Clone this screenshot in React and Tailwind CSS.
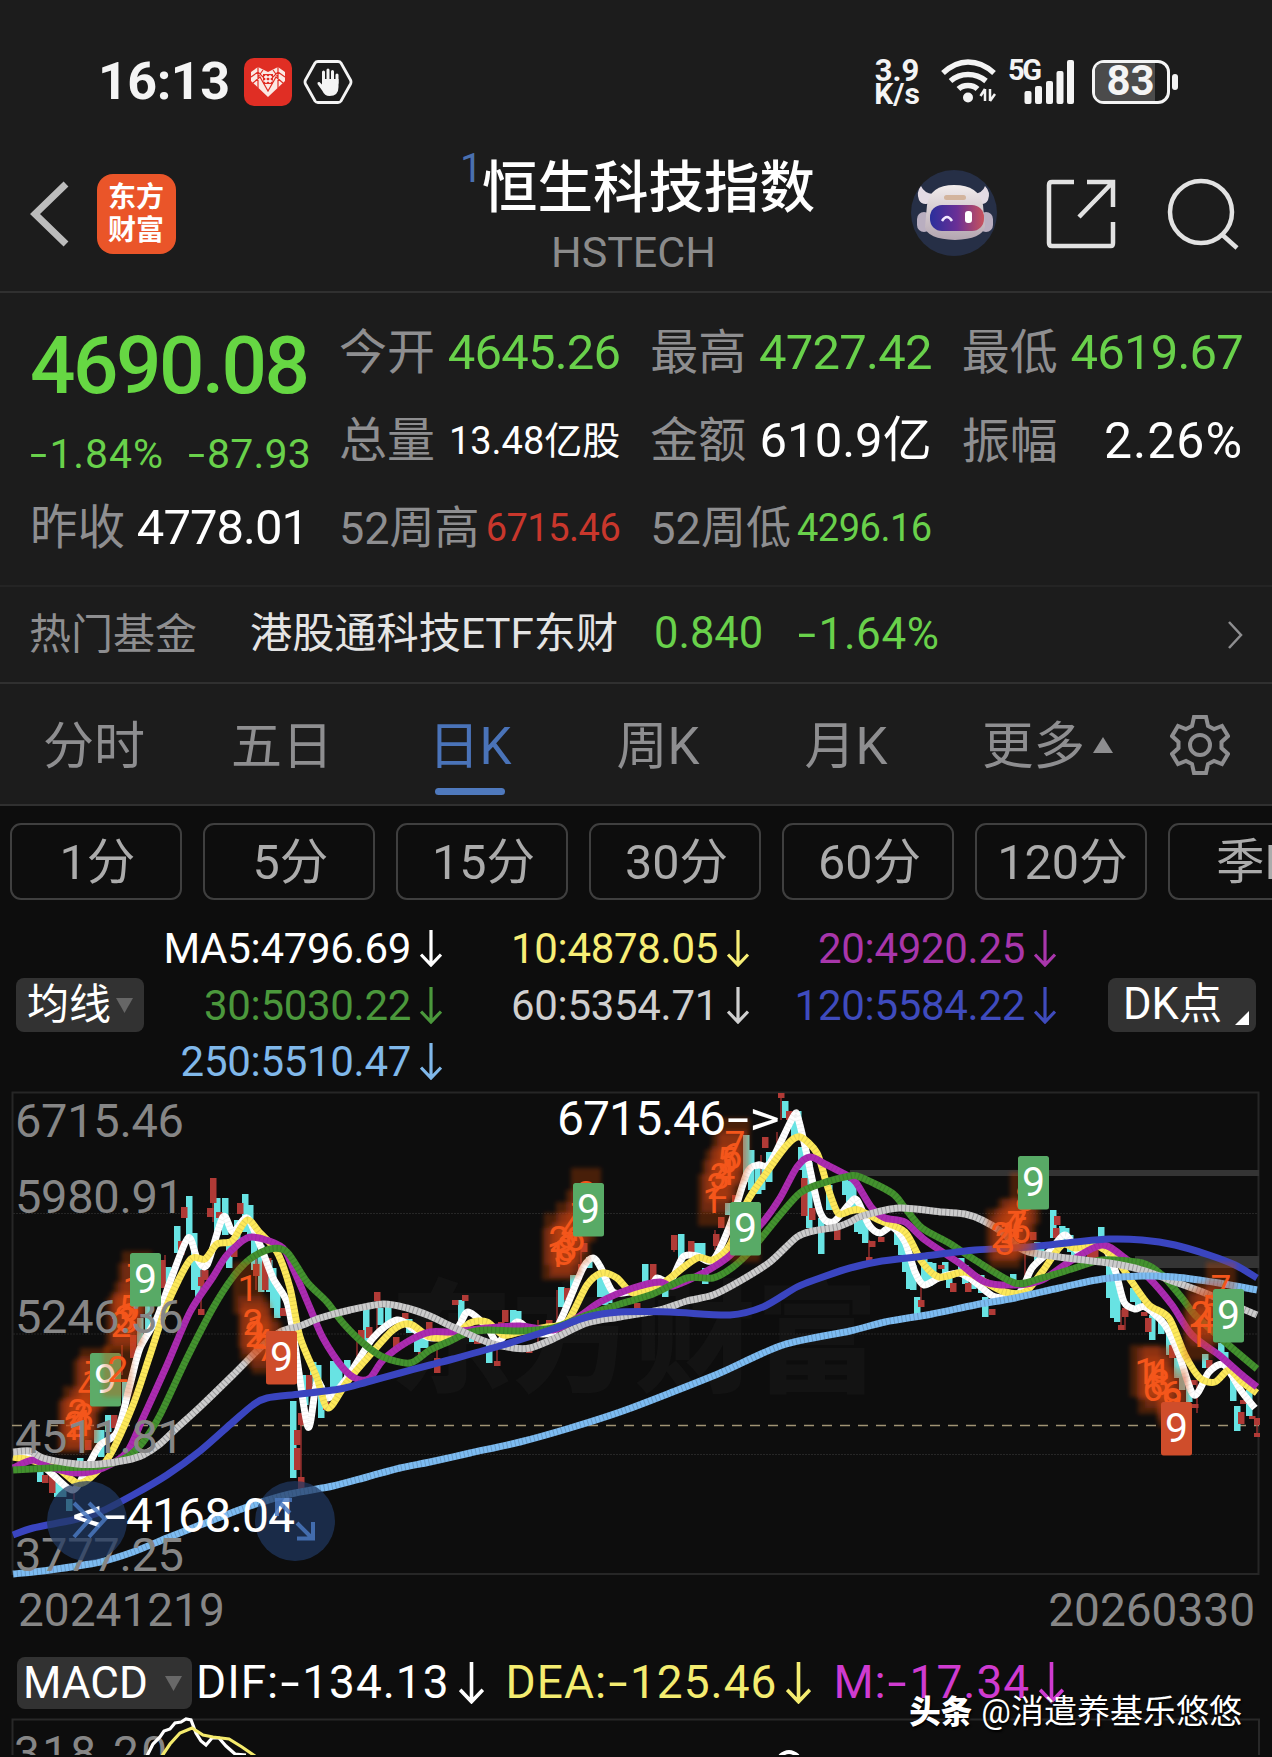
import { Fragment } from 'react'

const quotes = [
    { label: '今开', value: '4645.26', color: 'text-[#69d14b]', size: 'text-[49px] tracking-[-0.8px]' },
    { label: '最高', value: '4727.42', color: 'text-[#69d14b]', size: 'text-[49px] tracking-[-0.8px]' },
    { label: '最低', value: '4619.67', color: 'text-[#69d14b]', size: 'text-[49px] tracking-[-0.8px]' },
    { label: '总量', value: '13.48亿股', color: 'text-white', size: 'relative -top-[3px] text-[38px]' },
    { label: '金额', value: '610.9亿', color: 'text-white', size: 'text-[49px]' },
    { label: '振幅', value: '2.26%', color: 'text-white', size: 'text-[50px] tracking-[1px]' },
    { label: '52周高', value: '6715.46', color: 'text-[#c9372c]', size: 'relative -top-[3px] text-[38px] tracking-[-0.5px]', small: true },
    { label: '52周低', value: '4296.16', color: 'text-[#69d14b]', size: 'relative -top-[3px] text-[38px] tracking-[-0.5px]', small: true },
]

const tabs = ['分时', '五日', '日K', '周K', '月K']
const periods = ['1分', '5分', '15分', '30分', '60分', '120分', '季K']

const averages = [
    { text: 'MA5:4796.69', color: 'text-white' },
    { text: '10:4878.05', color: 'text-[#f7ee76]' },
    { text: '20:4920.25', color: 'text-[#a836ab]' },
    { text: '30:5030.22', color: 'text-[#4b983c]' },
    { text: '60:5354.71', color: 'text-[#cfcfcf]' },
    { text: '120:5584.22', color: 'text-[#3f4bbd]' },
    { text: '250:5510.47', color: 'text-[#80b8ea]' },
]

const macd = [
    { text: 'DIF:-134.13', color: 'text-white' },
    { text: 'DEA:-125.46', color: 'text-[#f4ec70]' },
    { text: 'M:-17.34', color: 'text-[#cf3bd0]' },
]

// moving averages, x y pairs
const lines = {
    ma5: '13 1456 33 1457 50 1472 73 1490 87 1468 100 1445 117 1432 130 1385 140 1348 157 1318 170 1282 188 1238 197 1258 207 1265 223 1217 233 1232 247 1218 260 1245 273 1278 287 1302 295 1345 308 1427 317 1382 328 1398 347 1378 373 1338 397 1320 415 1330 433 1338 457 1328 468 1312 487 1327 498 1342 517 1322 533 1333 553 1332 563 1315 583 1268 593 1258 601 1268 613 1292 630 1292 647 1293 657 1278 670 1282 683 1257 697 1256 713 1260 730 1225 747 1173 758 1165 770 1163 793 1117 798 1118 807 1155 820 1212 833 1222 850 1203 857 1200 869 1225 880 1233 892 1227 905 1242 915 1272 924 1285 939 1278 959 1273 975 1282 995 1297 1019 1293 1032 1268 1049 1252 1065 1235 1079 1252 1102 1245 1115 1270 1124 1302 1135 1309 1145 1307 1165 1325 1179 1355 1194 1395 1209 1372 1224 1365 1242 1392 1255 1408',
    ma10: '13 1457 30 1460 57 1468 77 1483 90 1478 110 1455 133 1405 150 1355 167 1305 190 1260 205 1259 217 1244 232 1241 247 1220 260 1233 277 1252 290 1288 300 1337 317 1378 328 1408 347 1382 370 1355 393 1330 410 1324 430 1337 453 1337 470 1323 487 1322 503 1335 520 1332 547 1327 567 1322 587 1285 602 1273 617 1278 633 1293 657 1287 670 1278 697 1258 713 1260 730 1245 747 1202 767 1172 787 1145 800 1137 817 1153 827 1185 838 1213 850 1211 859 1210 879 1220 905 1232 922 1262 939 1277 965 1272 985 1282 1005 1292 1025 1292 1042 1272 1062 1245 1075 1248 1095 1245 1115 1258 1132 1282 1149 1305 1169 1318 1185 1355 1200 1378 1215 1382 1229 1370 1242 1382 1257 1393',
    ma20: '13 1468 33 1460 50 1467 77 1473 103 1468 127 1452 143 1418 167 1365 190 1312 213 1277 227 1255 247 1238 263 1239 283 1248 293 1268 310 1308 323 1338 343 1368 357 1379 370 1378 383 1360 407 1342 430 1332 453 1332 487 1328 520 1326 553 1330 577 1318 600 1302 633 1288 660 1282 673 1286 703 1273 727 1258 745 1240 763 1222 780 1198 797 1167 810 1157 827 1165 850 1177 857 1184 872 1208 885 1218 905 1222 925 1240 959 1263 985 1282 1015 1285 1042 1280 1069 1262 1102 1245 1125 1258 1149 1278 1172 1305 1192 1335 1219 1355 1242 1375 1257 1387',
    ma30: '13 1470 50 1468 100 1466 127 1457 143 1442 160 1415 187 1358 213 1308 233 1277 250 1259 270 1249 287 1252 307 1282 327 1302 343 1323 363 1343 383 1357 410 1363 430 1350 450 1341 467 1333 487 1330 520 1331 553 1328 587 1315 620 1304 653 1294 687 1278 713 1278 733 1267 753 1248 780 1215 800 1193 820 1184 850 1176 860 1177 892 1193 905 1208 922 1228 949 1243 975 1260 1015 1283 1042 1278 1075 1268 1102 1260 1142 1263 1162 1275 1182 1298 1195 1315 1225 1342 1257 1369',
    ma60: '13 1452 30 1451 43 1458 77 1464 100 1464 127 1460 143 1455 160 1444 177 1428 200 1407 233 1375 260 1348 280 1332 300 1326 320 1318 350 1310 383 1304 407 1308 430 1316 453 1327 487 1342 513 1348 530 1348 553 1339 587 1323 620 1317 660 1310 687 1301 713 1295 740 1281 770 1262 797 1237 813 1231 837 1227 850 1222 862 1216 899 1208 942 1212 965 1214 982 1220 1002 1232 1015 1245 1029 1252 1059 1257 1109 1263 1142 1270 1175 1282 1205 1293 1257 1315',
    ma120: '13 1535 33 1528 73 1520 100 1512 133 1495 167 1475 200 1451 233 1422 253 1405 267 1398 300 1394 340 1389 367 1382 400 1373 430 1365 453 1359 503 1345 553 1329 587 1317 620 1312 670 1312 730 1315 763 1307 797 1287 820 1278 850 1268 882 1261 925 1256 975 1250 1029 1247 1075 1242 1109 1239 1142 1240 1175 1245 1209 1255 1235 1265 1257 1278',
    ma250: '13 1574 50 1570 100 1562 133 1552 167 1538 200 1525 250 1506 290 1494 333 1486 367 1477 400 1468 430 1462 470 1453 520 1442 570 1428 620 1412 670 1393 720 1373 783 1345 850 1331 885 1322 932 1314 975 1305 1015 1298 1059 1288 1102 1279 1142 1276 1175 1277 1219 1283 1257 1290',
}

// candles: x, top, bottom
const falling = [
    [40, 1470, 1482], [57, 1482, 1497], [63, 1484, 1497], [69, 1499, 1511], [80, 1458, 1468], [86, 1462, 1470], [97, 1430, 1443], [101, 1430, 1457], [108, 1415, 1432],
    [125, 1382, 1402], [140, 1318, 1345], [148, 1305, 1332], [168, 1267, 1298], [177, 1226, 1253], [189, 1196, 1240], [194, 1233, 1290],
    [198, 1262, 1297], [217, 1198, 1235], [225, 1198, 1235], [229, 1240, 1268], [237, 1220, 1240], [245, 1194, 1232], [250, 1205, 1238], [254, 1230, 1270],
    [261, 1245, 1292], [269, 1260, 1292], [273, 1268, 1308], [277, 1285, 1318], [293, 1401, 1478], [305, 1375, 1405], [313, 1362, 1385],
    [318, 1365, 1390], [321, 1385, 1418], [333, 1361, 1390], [339, 1365, 1392], [347, 1360, 1380], [363, 1330, 1345], [366, 1308, 1342], [380, 1308, 1325], [388, 1307, 1322],
    [409, 1319, 1333], [417, 1332, 1352], [421, 1335, 1348], [425, 1336, 1348], [461, 1300, 1320], [472, 1330, 1342], [489, 1342, 1363], [513, 1310, 1323], [518, 1311, 1323],
    [561, 1287, 1307], [573, 1275, 1292], [589, 1257, 1268], [600, 1272, 1297], [605, 1275, 1305], [609, 1285, 1303], [645, 1264, 1284], [665, 1285, 1297],
    [681, 1234, 1262], [697, 1243, 1260], [702, 1243, 1260], [705, 1268, 1284], [728, 1203, 1215], [746, 1135, 1182], [751, 1150, 1190], [758, 1168, 1194], [762, 1165, 1190], [769, 1152, 1182],
    [785, 1101, 1118], [794, 1115, 1138], [798, 1111, 1138], [801, 1147, 1170], [805, 1150, 1180], [809, 1162, 1228], [821, 1218, 1254], [829, 1185, 1210],
    [845, 1178, 1195], [849, 1181, 1202], [853, 1181, 1212], [857, 1218, 1232], [861, 1220, 1234], [865, 1220, 1243], [897, 1229, 1245], [901, 1235, 1255], [905, 1240, 1272], [909, 1255, 1289], [913, 1265, 1290],
    [917, 1297, 1314], [924, 1255, 1284], [929, 1262, 1286], [933, 1263, 1278], [945, 1262, 1277], [949, 1276, 1288], [961, 1258, 1270], [965, 1265, 1284], [973, 1276, 1289], [981, 1275, 1293],
    [985, 1297, 1317], [1013, 1274, 1284], [1037, 1242, 1262], [1041, 1245, 1260], [1053, 1210, 1238], [1062, 1226, 1240], [1066, 1228, 1244], [1070, 1235, 1252], [1074, 1240, 1256],
    [1101, 1227, 1247], [1109, 1263, 1298], [1113, 1272, 1318], [1117, 1275, 1322], [1133, 1288, 1302], [1138, 1294, 1310], [1152, 1315, 1340], [1161, 1318, 1334], [1169, 1332, 1355],
    [1177, 1358, 1378], [1182, 1368, 1390], [1189, 1385, 1402], [1205, 1354, 1368], [1221, 1343, 1358], [1225, 1352, 1366], [1233, 1372, 1401], [1237, 1406, 1431], [1249, 1390, 1416],
]

const rising = [
    [45, 1475, 1483], [52, 1475, 1493], [88, 1440, 1450], [114, 1415, 1428], [133, 1335, 1358], [162, 1260, 1288], [181, 1241, 1255], [184, 1207, 1218],
    [201, 1277, 1286], [201, 1309, 1315], [205, 1270, 1280], [213, 1178, 1203], [210, 1208, 1217], [219, 1212, 1218], [234, 1246, 1257], [240, 1203, 1214], [256, 1264, 1276], [265, 1258, 1290],
    [268, 1258, 1270], [283, 1308, 1316], [301, 1413, 1425], [297, 1430, 1445], [297, 1448, 1470], [301, 1477, 1490], [309, 1375, 1392], [326, 1402, 1410], [361, 1330, 1340],
    [369, 1327, 1338], [377, 1292, 1301], [396, 1337, 1348], [405, 1313, 1319], [421, 1352, 1358], [429, 1322, 1330], [437, 1358, 1373], [455, 1300, 1305], [465, 1295, 1301], [477, 1340, 1344],
    [497, 1361, 1366], [501, 1322, 1328], [505, 1310, 1322], [529, 1347, 1353], [549, 1320, 1327], [567, 1288, 1300], [581, 1264, 1272], [584, 1243, 1252], [637, 1303, 1309],
    [653, 1264, 1280], [674, 1235, 1250], [691, 1241, 1256], [716, 1234, 1246], [721, 1217, 1228], [735, 1195, 1204], [765, 1137, 1148], [781, 1093, 1098], [789, 1111, 1120],
    [804, 1178, 1216], [812, 1208, 1220], [837, 1228, 1240], [869, 1257, 1263], [872, 1241, 1247], [881, 1237, 1242], [921, 1300, 1307], [941, 1265, 1269], [953, 1283, 1292], [968, 1283, 1292],
    [992, 1309, 1315], [1033, 1232, 1240], [1057, 1216, 1225], [1056, 1228, 1238], [1090, 1250, 1258], [1095, 1250, 1258], [1121, 1325, 1330], [1125, 1308, 1317], [1144, 1312, 1316], [1148, 1318, 1332], [1172, 1345, 1358], [1193, 1380, 1385],
    [1209, 1360, 1368], [1195, 1404, 1408], [1241, 1412, 1424], [1243, 1400, 1404], [1257, 1418, 1425], [1257, 1433, 1437], [1252, 1416, 1419],
]

const wicks = [
    [201, 1270, 1315], [213, 1178, 1222], [301, 1413, 1480], [74, 1480, 1500], [122, 1345, 1375], [165, 1255, 1300], [256, 1255, 1290], [357, 1335, 1370], [377, 1298, 1330], [437, 1350, 1360],
    [497, 1345, 1365], [538, 1320, 1345], [557, 1290, 1325], [581, 1245, 1280], [674, 1235, 1252], [777, 1132, 1160], [781, 1093, 1120], [869, 1240, 1260], [921, 1280, 1305],
    [1025, 1240, 1290], [1121, 1310, 1330], [1125, 1308, 1330], [1197, 1380, 1413], [1257, 1418, 1437], [715, 1230, 1250], [761, 1155, 1175],
]

// running counts that lead up to a nine-turn badge: x, y (left top of the cell), digit
const counts = [
    [58, 1401, '1'], [60, 1398, '2'], [63, 1386, '2'], [66, 1397, '4'], [69, 1390, '3'], [73, 1360, '4'], [77, 1356, '1'], [80, 1348, '7'],
    [106, 1298, '2'], [110, 1292, '3'], [113, 1294, '3'], [114, 1282, '5'], [118, 1263, '1'], [122, 1251, '7'],
    [233, 1262, '1'], [238, 1296, '2'], [240, 1308, '2'], [242, 1302, '1'], [248, 1316, '4'], [252, 1322, '7'],
    [542, 1228, '1'], [544, 1213, '2'], [549, 1226, '3'], [552, 1222, '8'], [556, 1202, '4'], [560, 1212, '6'], [566, 1190, '7'], [571, 1168, '8'],
    [698, 1174, '1'], [702, 1160, '2'], [705, 1150, '3'], [710, 1146, '4'], [712, 1134, '5'], [717, 1130, '6'], [720, 1118, '7'], [730, 1210, '8'],
    [986, 1209, '2'], [990, 1216, '3'], [994, 1208, '1'], [998, 1199, '4'], [1002, 1198, '7'], [1006, 1204, '6'], [1010, 1172, '8'],
    [1130, 1345, '1'], [1137, 1348, '1'], [1143, 1346, '4'], [1138, 1362, '6'], [1145, 1356, '8'], [1157, 1368, '6'], [1158, 1375, '8'],
    [1183, 1308, '1'], [1186, 1288, '2'], [1190, 1294, '4'], [1196, 1282, '5'], [1206, 1262, '7'],
]

const badges = [
    { x: 90, y: 1353, fill: '#5dab68' },
    { x: 130, y: 1253, fill: '#58aa66' },
    { x: 266, y: 1331, fill: '#cf4d2b' },
    { x: 573, y: 1183, fill: '#58aa66' },
    { x: 730, y: 1202, fill: '#58aa66' },
    { x: 1018, y: 1156, fill: '#58aa66' },
    { x: 1161, y: 1402, fill: '#cf4d2b' },
    { x: 1213, y: 1289, fill: '#58aa66' },
]

const axis = [
    ['6715.46', 1137],
    ['5980.91', 1213],
    ['5246.36', 1333],
    ['4511.81', 1453],
    ['3777.25', 1571],
]

const toPath = (str) => {
    const n = str.split(' ').map(Number)
    const p = []
    for (let i = 0; i < n.length; i += 2) p.push([n[i], n[i + 1]])
    let d = `M${p[0][0]} ${p[0][1]}`
    for (let i = 0; i < p.length - 1; i++) {
        const a = p[i - 1] || p[i]
        const b = p[i]
        const c = p[i + 1]
        const e = p[i + 2] || c
        d += `C${b[0] + (c[0] - a[0]) / 7} ${b[1] + (c[1] - a[1]) / 7} ${c[0] - (e[0] - b[0]) / 7} ${c[1] - (e[1] - b[1]) / 7} ${c[0]} ${c[1]}`
    }
    return d
}

// hyphens are drawn wider than the font's own
const Num = ({ children }) =>
    children.split('-').map((part, i) => (
        <Fragment key={i}>
            {i > 0 && <span className="inline-block scale-x-150 mx-[0.1em]">-</span>}
            {part}
        </Fragment>
    ))

const DownArrow = ({ className }) => (
    <svg viewBox="0 0 22 37" className={className} fill="none" stroke="currentColor" strokeWidth="3.2">
        <path d="M11 0V35M1 24.500L11 35L21 24.500" />
    </svg>
)

const StatusBar = () => (
    <div className="flex items-center h-[134px] pt-[30px] pl-[98px] pr-[94px] text-[#f4f4f4]">
        <span className="text-[52px] font-bold leading-none tracking-[-0.5px] w-[146px]">16:13</span>
        <svg width="48" height="48" viewBox="0 0 48 48">
            <rect width="48" height="48" rx="10" fill="#e02e24" />
            <path d="M24 39L7 23V14L14 9L24 14L34 9L41 14V23Z" fill="#fbe9e4" />
            <path d="M7 19L14 14L24 24L34 14L41 19M14 9V30M34 9V30M9 25L16 19L24 33L32 19L39 25M19 12L14 19M29 12L34 19" stroke="#e02e24" strokeWidth="1.200" fill="none" />
            <rect x="19" y="16" width="10" height="10" fill="#e02e24" />
            <path d="M20 19H28M19.500 23H28.500M22 17V25M26 17V25" stroke="#fff" strokeWidth="1.300" />
        </svg>
        <svg width="50" height="46" viewBox="0 0 50 46" className="ml-[11px]">
            <path d="M15 2.500H35Q37 2.500 38 4L47.500 21Q48.500 23 47.500 25L38 42Q37 43.500 35 43.500H15Q13 43.500 12 42L2.500 25Q1.500 23 2.500 21L12 4Q13 2.500 15 2.500Z" fill="none" stroke="#f4f4f4" strokeWidth="2.800" />
            <path d="M20.500 23V13M25 22V11M29.500 22V12.500M34 24V16" stroke="#f4f4f4" strokeWidth="3" strokeLinecap="round" />
            <path d="M19 20H35.500V28Q35.500 37 26.500 37Q21.500 37 19.500 32L14.500 25Q14 22.500 16.500 23L19 25.500Z" fill="#f4f4f4" />
        </svg>
        <div className="ml-auto w-[50px] mr-[19px] text-center font-bold text-[31px] leading-[23px] whitespace-nowrap">
            <div>3.9</div>
            <div className="text-[30px]">K/s</div>
        </div>
        <svg width="56" height="46" viewBox="0 0 56 46" fill="none" stroke="#f4f4f4" strokeWidth="5.500">
            <path d="M2 14Q14 3 27 3Q41 3 53 14M9.500 22Q17 15.500 27 15.500Q37 15.500 45 22M17.500 30Q21 26.500 27 26.500Q33 26.500 36.500 30" />
            <circle cx="27" cy="38.500" r="5" fill="#f4f4f4" stroke="none" />
            <path d="M44 30V42M44 30L39.500 37M49 42V30M49 42L54 35" strokeWidth="2.500" />
        </svg>
        <div className="relative w-[66px] h-[46px] ml-[12px]">
            <span className="absolute left-[-1px] top-[-1px] text-[29px] leading-[24px] font-bold tracking-[-2.5px]">5G</span>
            <svg width="66" height="46" viewBox="0 0 66 46" fill="#f4f4f4">
                <rect x="15.500" y="32" width="7" height="13" rx="2" />
                <rect x="26" y="27" width="7" height="18" rx="2" />
                <rect x="37" y="22" width="7" height="23" rx="2" />
                <rect x="47.500" y="12" width="7" height="33" rx="2" />
                <rect x="58" y="1" width="7" height="44" rx="2" />
            </svg>
        </div>
        <div className="relative ml-[17px] w-[78px] h-[44px] rounded-[12px] border-[3.5px] border-[#f4f4f4] shrink-0">
            <div className="h-full w-[60px] rounded-l-[8px] bg-[#4b4b4b]" />
            <span className="absolute inset-0 pr-[1px] text-center text-[42px] leading-[36px] font-bold">83</span>
        </div>
        <div className="w-[6px] h-[16px] ml-[2px] rounded-[3px] bg-[#f4f4f4] shrink-0" />
    </div>
)

const Robot = () => (
    <svg width="88" height="88" viewBox="0 0 88 88">
        <defs>
            <linearGradient id="visor" x1="0" x2="1">
                <stop offset="0" stopColor="#2a2f9c" />
                <stop offset="0.500" stopColor="#6a2f96" />
                <stop offset="1" stopColor="#c8525c" />
            </linearGradient>
            <linearGradient id="shell" x1="0" x2="0" y1="0" y2="1">
                <stop offset="0" stopColor="#f2ecec" />
                <stop offset="1" stopColor="#b3a5b0" />
            </linearGradient>
        </defs>
        <circle cx="44" cy="44" r="43" fill="#262f46" />
        <path d="M11 17Q6 23 9 31Q12 37 21 34L23 25Q14 24 11 17ZM75 17Q81 23 78 31Q75 37 67 34L63 25Q73 24 75 17Z" fill="#e4dbe4" />
        <rect x="7" y="43" width="14" height="20" rx="7" fill="#b9aec0" />
        <rect x="69" y="43" width="14" height="20" rx="7" fill="#b9aec0" />
        <path d="M17 36Q20 16 44 16Q69 16 73 36L75 58Q72 70 45 71Q17 70 15 58Z" fill="url(#shell)" />
        <rect x="34" y="26" width="22" height="5" rx="2.500" fill="#d3b49d" />
        <rect x="20" y="36" width="54" height="26" rx="12" fill="url(#visor)" />
        <path d="M32 52Q37 44 42 52" stroke="#f3e9ff" strokeWidth="2.500" fill="none" />
        <rect x="55" y="42" width="7" height="12" rx="3" fill="#fff" />
    </svg>
)

const Header = () => (
    <div className="flex items-start h-[159px] border-b-2 border-[#303030]">
        <svg width="40" height="66" viewBox="0 0 40 66" className="ml-[30px] mt-[47px]" fill="none" stroke="#bcbcbc" strokeWidth="7">
            <path d="M36 3L5 33L36 63" />
        </svg>
        <div className="ml-[27px] mt-[40px] w-[79px] h-[80px] rounded-[16px] bg-[#ea5529] text-white font-bold text-[28px] leading-[33px] text-center pt-[7px] pr-[1px]">
            东方
            <br />
            财富
        </div>
        <div className="ml-[285px] w-[352px] flex">
            <span className="text-[40px] leading-none text-[#4a70b0] mt-[15px] -ml-[1px]">1</span>
            <div className="w-[332px] flex flex-col items-center">
                <span className="text-[55.5px] leading-[60px] font-medium text-white mt-[25px] whitespace-nowrap">恒生科技指数</span>
                <span className="text-[43px] leading-[50px] text-[#8b8b8b] mt-[8px] -ml-[30px]">HSTECH</span>
            </div>
        </div>
        <div className="ml-auto mt-[35px] mr-[33px] flex items-center">
            <Robot />
            <svg width="70" height="70" viewBox="0 0 70 70" className="ml-[48px] mt-[2px]" fill="none" stroke="#e2e2e2" strokeWidth="4.500">
                <path d="M28 3H6Q3 3 3 6V64Q3 67 6 67H65Q67 67 67 64V43M41 3H67V28M66 4L33 38" />
            </svg>
            <svg width="72" height="72" viewBox="0 0 72 72" className="ml-[51px] mt-[2px]" fill="none" stroke="#e2e2e2" strokeWidth="4.500">
                <circle cx="34" cy="34" r="31" />
                <path d="M55.500 57L70 70" />
            </svg>
        </div>
    </div>
)

const Quote = () => (
    <div className="flex h-[294px] pl-[31px] pr-[29px] pt-[13px] border-b-2 border-[#242424]">
        <div className="w-[279px] mr-[29px] whitespace-nowrap">
            <div className="text-[80px] leading-[88px] font-medium text-[#66d743] tracking-[-2.5px] mt-[16px] -ml-[1px]">4690.08</div>
            <div className="flex justify-between text-[41px] leading-[50px] text-[#69d14b] mt-[19px] -ml-[2px]">
                <span className="tracking-[0.9px]"><Num>-1.84%</Num></span>
                <span className="tracking-[0.2px] -mr-[1px]"><Num>-87.93</Num></span>
            </div>
            <div className="flex items-baseline justify-between mt-[19px] leading-[60px]">
                <span className="text-[47.5px] text-[#8e8e90] -ml-[1px]">昨收</span>
                <span className="text-[49px] text-white mr-[2px] tracking-[-1px]">4778.01</span>
            </div>
        </div>
        <div className="flex-1 grid grid-cols-3 gap-x-[30px] auto-rows-[88px] whitespace-nowrap mt-[3px]">
            {quotes.map((q) => (
                <div key={q.label} className="flex items-baseline justify-between leading-[88px]">
                    <span className={`text-[#8e8e90] ${q.small ? 'text-[45px]' : 'text-[48px]'}`}>{q.label}</span>
                    <span className={`${q.size} ${q.color}`}>{q.value}</span>
                </div>
            ))}
        </div>
    </div>
)

const FundRow = () => (
    <div className="flex items-center h-[97px] pl-[29px] pr-[28px] border-b-2 border-[#303030] whitespace-nowrap">
        <span className="text-[42px] text-[#8e8e90] w-[221px]">热门基金</span>
        <span className="text-[42.2px] text-[#e4e4e4] w-[404px] pb-[1px]">港股通科技ETF东财</span>
        <span className="text-[43.5px] text-[#69d14b] w-[143px] pb-[2px]">0.840</span>
        <span className="text-[44px] text-[#69d14b] pb-[2px] tracking-[0.6px]"><Num>-1.64%</Num></span>
        <svg width="18" height="30" viewBox="0 0 18 30" className="ml-auto" fill="none" stroke="#8e8e90" strokeWidth="2.500">
            <path d="M3 2L15 15L3 28" />
        </svg>
    </div>
)

const gearPoints = 'M24 2H36L38 11L44 14L52 11L58 21L51.500 27V33L58 39L52 49L44 46L38 49L36 58H24L22 49L16 46L8 49L2 39L8.500 33V27L2 21L8 11L16 14L22 11Z'

const Tabs = () => (
    <div className="flex items-center h-[122px] border-b-2 border-[#303030] text-[51px] text-[#8e8e90]">
        {tabs.map((tab) => (
            <div
                key={tab}
                className={`relative w-[188px] h-full flex items-center justify-center pt-[6px] whitespace-nowrap ${tab === '日K' ? 'text-[#4a73b8]' : ''}`}
            >
                {tab}
                {tab === '日K' && <span className="absolute bottom-[9px] w-[70px] h-[7px] rounded-full bg-[#4f79bd]" />}
            </div>
        ))}
        <span className="ml-[42px] pt-[6px] text-[51.5px] whitespace-nowrap">更多</span>
        <svg width="20" height="16" viewBox="0 0 20 16" className="ml-[8px] mt-[2px]">
            <path d="M10 0L20 16H0Z" fill="#8e8e90" />
        </svg>
        <svg width="60" height="60" viewBox="0 0 60 60" className="ml-[57px] mt-[2px]" fill="none" stroke="#8e8e90" strokeWidth="4">
            <path d={gearPoints} />
            <circle cx="30" cy="30" r="10" />
        </svg>
    </div>
)

const Periods = () => (
    <div className="flex gap-[21px] pl-[10px] pt-[17px] h-[114px] overflow-hidden">
        {periods.map((p) => (
            <div key={p} className="w-[172px] h-[77px] shrink-0 rounded-[11px] border-2 border-[#3f3f3f] flex items-center justify-center pt-[4px] pl-[3px] text-[48.5px] text-[#ababab] whitespace-nowrap">
                {p}
            </div>
        ))}
    </div>
)

const Averages = () => (
    <div className="relative flex items-center h-[170px] pl-[16px] pr-[16px]">
        <div className="w-[128px] h-[54px] rounded-[8px] bg-[#323232] flex items-center pl-[11px] text-white text-[42px] leading-none whitespace-nowrap">
            均线
            <svg width="17" height="15" viewBox="0 0 17 15" className="ml-[5px]">
                <path d="M0 0H17L8.500 15Z" fill="#666" />
            </svg>
        </div>
        <div className="grid grid-cols-[298px_307px_307px] auto-rows-[56.5px] text-[42px]">
            {averages.map((a) => (
                <div key={a.text} className={`flex items-center justify-end gap-[9px] ${a.color} tracking-[-0.3px]`}>
                    {a.text}
                    <DownArrow className="w-[22px] h-[37px]" />
                </div>
            ))}
        </div>
        <div className="relative ml-auto w-[148px] h-[54px] rounded-[8px] bg-[#323232] pl-[15px] text-white text-[43.5px] leading-[53px] whitespace-nowrap">
            DK点
            <svg width="14" height="14" viewBox="0 0 14 14" className="absolute right-[7px] bottom-[7px]">
                <path d="M14 0V14H0Z" fill="#fff" />
            </svg>
        </div>
    </div>
)

const MaLine = ({ data, color, ticks }) => (
    <>
        <path d={toPath(data)} fill="none" stroke={color} strokeWidth="7" strokeLinejoin="round" />
        {ticks && <path d={toPath(data)} fill="none" stroke="#101018" strokeOpacity={ticks} strokeWidth="7" strokeDasharray="1 3" />}
    </>
)

const KChart = () => (
    <svg width="1272" height="490" viewBox="0 1090 1272 490" className="block shrink-0">
        <defs>
            <filter id="soft" x="-20%" y="-20%" width="140%" height="140%">
                <feGaussianBlur stdDeviation="2" />
            </filter>
            <clipPath id="plot">
                <rect x="12" y="1090" width="1248" height="490" />
            </clipPath>
        </defs>

        <text x="390" y="1382" fontSize="122" fontWeight="900" fill="#131313">东方财富</text>

        <rect x="12.500" y="1092.500" width="1246" height="481.500" fill="none" stroke="#262626" strokeWidth="2" />
        {[1213.5, 1334, 1454.5].map((y) => (
            <path key={y} d={`M13 ${y}H1259`} stroke="#262626" strokeDasharray="2 1" />
        ))}

        <rect x="850" y="1170" width="409" height="6" fill="#343434" />
        <rect x="1135" y="1256" width="124" height="12" fill="#343434" />

        <path d="M12 1425.500H1259" stroke="#a09374" strokeWidth="1.500" strokeDasharray="10 8" />

        <g clipPath="url(#plot)">
            {falling.map(([x, t, b], i) => (
                <rect key={i} x={x - 3} y={t} width="6.500" height={b - t} fill="#68e3e3" />
            ))}
            {wicks.map(([x, t, b], i) => (
                <path key={i} d={`M${x} ${t}V${b}`} stroke="#a83432" strokeWidth="1.300" />
            ))}
            {rising.map(([x, t, b], i) => (
                <rect key={i} x={x - 3} y={t} width="6.500" height={b - t} fill="#b03a36" />
            ))}
            <MaLine data={lines.ma5} color="#ffffff" ticks="0.06" />
            <MaLine data={lines.ma10} color="#fde95a" ticks="0.1" />
            <MaLine data={lines.ma20} color="#ab2bb0" ticks="0.06" />
            <MaLine data={lines.ma30} color="#43922e" ticks="0.15" />
            <MaLine data={lines.ma60} color="#cccccc" ticks="0.25" />
            <MaLine data={lines.ma120} color="#3a45c0" />
            <MaLine data={lines.ma250} color="#7dbcf2" ticks="0.18" />
        </g>

        <g filter="url(#soft)" fill="#d0470f" fillOpacity="0.3">
            {counts.map(([x, y], i) => (
                <rect key={i} x={x} y={y} width="30" height="52" />
            ))}
        </g>
        <g fill="#f4561b" fontSize="37" textAnchor="middle">
            {counts.map(([x, y, n], i) => (
                <text key={i} x={x + 15} y={y + 39}>{n}</text>
            ))}
        </g>

        <g fontSize="47" fill="#868686">
            {axis.map(([label, y]) => (
                <text key={label} x="15" y={y} textLength="169">{label}</text>
            ))}
        </g>

        {badges.map((b) => (
            <g key={b.x}>
                <rect x={b.x} y={b.y} width="31" height="53.500" rx="2.500" fill={b.fill} />
                <text x={b.x + 15.5} y={b.y + 40} fontSize="41" fill="#fff" textAnchor="middle">9</text>
            </g>
        ))}

        {/* first count of the next run lies on the badge */}
        <rect x="103" y="1345" width="30" height="52" fill="#d0470f" fillOpacity="0.3" filter="url(#soft)" />
        <text x="118" y="1382" fontSize="37" fill="#f4561b" textAnchor="middle">2</text>

        <g fillOpacity="0.72" fill="#20385f">
            <circle cx="87" cy="1521" r="40" />
            <circle cx="295" cy="1521" r="40" />
        </g>
        <g fontSize="48" fill="#fff">
            <text x="557" y="1135" textLength="169">6715.46</text>
            <text x="72" y="1532" textLength="32" lengthAdjust="spacingAndGlyphs">&lt;</text>
            <text x="104" y="1532" textLength="22" lengthAdjust="spacingAndGlyphs">-</text>
            <text x="126" y="1532" textLength="169">4168.04</text>
            <text x="727" y="1135" textLength="22" lengthAdjust="spacingAndGlyphs">-</text>
            <text x="749" y="1135" textLength="31" lengthAdjust="spacingAndGlyphs">&gt;</text>
        </g>
        <g fill="none" stroke="#4a78c0" strokeWidth="4" strokeOpacity="0.85">
            <path d="M74 1503L90 1519L74 1537M89 1503L105 1519L89 1537" />
            <path d="M277 1516V1500H292M277 1500L290 1513M297 1523L312 1538M297 1538.500H313V1522" />
        </g>
    </svg>
)

const MacdBar = () => (
    <div className="flex items-center h-[54px] mt-[15px] ml-[17px] text-[46px] whitespace-nowrap">
        <div className="w-[175px] h-[52px] mr-[4px] rounded-[8px] bg-[#323232] flex items-center pl-[6px] text-[44px] leading-none text-white shrink-0">
            MACD
            <svg width="17" height="15" viewBox="0 0 17 15" className="ml-auto mr-[10px]">
                <path d="M0 0H17L8.500 15Z" fill="#686868" />
            </svg>
        </div>
        {macd.map((m) => (
            <div key={m.text} className={`flex items-center gap-[9px] mr-[22px] ${m.color} tracking-[1px]`}>
                <span className="-mt-[2px]"><Num>{m.text}</Num></span>
                <DownArrow className="w-[25px] h-[42px]" />
            </div>
        ))}
    </div>
)

const MacdChart = () => (
    <svg width="1272" height="38" viewBox="0 1719 1272 38" className="block shrink-0 mt-[7px]">
        <path d="M12.500 1757V1721.500H1259V1757" fill="none" stroke="#282828" strokeWidth="2" />
        <text x="14" y="1771" fontSize="46" fill="#868686" textLength="153">318.20</text>
        <path d="M147 1758L153 1746L160 1739L164 1733L170 1731L175 1725L181 1724L186 1721L191 1722L196 1735L201 1743L206 1747L212 1740L219 1740L226 1748L235 1756L246 1757" fill="none" stroke="#fff" strokeWidth="3.200" />
        <path d="M162 1758L170 1746L180 1735L192 1730L203 1737L213 1739L229 1741L242 1749L255 1758" fill="none" stroke="#f4ea6c" strokeWidth="3.200" />
        <path d="M780 1758Q789 1750 798 1758" fill="none" stroke="#fff" strokeWidth="4" />
    </svg>
)

const App = () => {
    return (
        <div className="relative w-[1272px] h-[1757px] overflow-hidden bg-[#0d0d0d] font-['Roboto','Noto_Sans_CJK_SC',sans-serif]">
            <div className="bg-[#1c1c1c]">
                <StatusBar />
                <Header />
                <Quote />
                <FundRow />
                <Tabs />
            </div>
            <Periods />
            <Averages />
            <KChart />
            <div className="flex justify-between pl-[18px] pr-[17px] -mt-px text-[46px] leading-[62px] text-[#868686]">
                <span>20241219</span>
                <span>20260330</span>
            </div>
            <MacdBar />
            <MacdChart />

            {/* author mark over the lower right corner */}
            <div className="absolute right-[30px] bottom-[24px] flex items-baseline text-white text-[33px] leading-[40px] whitespace-nowrap [text-shadow:1px_2px_2px_#000]">
                <span className="font-black text-[31.5px] mr-[9px]">头条</span>
                <span>@消遣养基乐悠悠</span>
            </div>
        </div>
    )
}

export default App
